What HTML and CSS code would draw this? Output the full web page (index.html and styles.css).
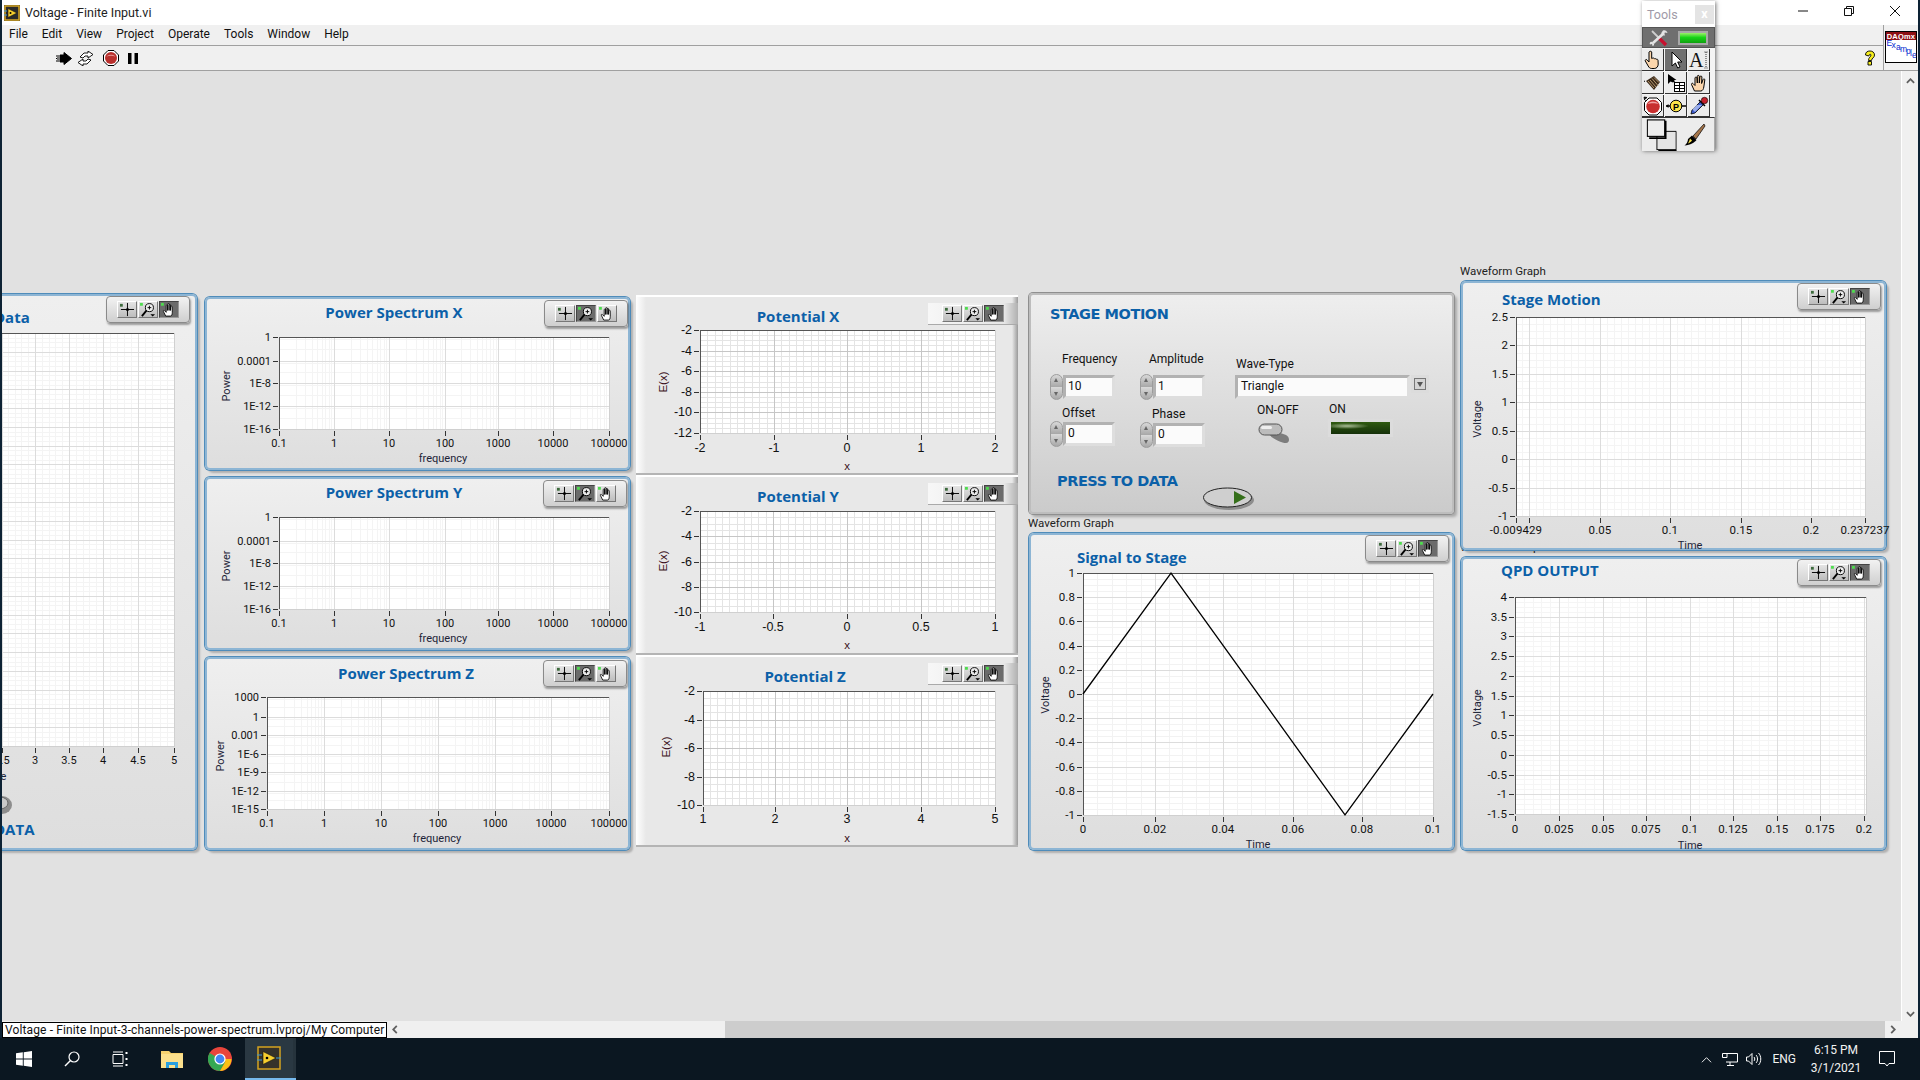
FILE: index.html
```html
<!DOCTYPE html>
<html lang="en">
<head>
<meta charset="utf-8">
<title>Voltage - Finite Input.vi</title>
<link rel="stylesheet" href="styles.css">
</head>
<body>
<svg class="defs" aria-hidden="true">
  <symbol id="g-cross" viewBox="0 0 19 16">
    <rect x="2" y="2" width="3" height="3" fill="#3d6b3d"/>
    <path d="M10 1v14M3 8h14" stroke="#000" stroke-width="1"/>
    <circle cx="10" cy="8" r="1.6" fill="#000"/>
  </symbol>
  <symbol id="g-zoom" viewBox="0 0 19 16">
    <rect x="1" y="1" width="3" height="3" fill="#4fdc4f"/>
    <circle cx="11" cy="6" r="4.3" fill="#eee" stroke="#000"/>
    <path d="M9 6h4M11 4v4" stroke="#000"/>
    <path d="M8 9 3 15" stroke="#000" stroke-width="2"/>
    <path d="M12 13h5l-2.500 2.500z" fill="#000"/>
  </symbol>
  <symbol id="g-hand" viewBox="0 0 19 16">
    <rect x="1" y="1" width="3" height="3" fill="#4fdc4f"/>
    <path d="M6 15 3.500 10c-.4-1 .7-1.500 1.300-.7L6.500 11V4c0-1 1.500-1 1.500 0v5V2.500c0-1 1.600-1 1.600 0V9 3.200c0-1 1.500-1 1.500 0V9l.3-4c.2-1 1.500-.8 1.500.2L13 11c0 2-.5 4-2 4z" fill="#fff" stroke="#000" stroke-width=".9"/>
  </symbol>
  <symbol id="t-point" viewBox="0 0 20 20">
    <path d="M6 2c.6-1 2.400-1 2.700 0v6.500l1-.4c.8-.3 1.500.2 1.700.7.7-.4 1.500-.2 1.800.5.800-.4 1.600 0 1.800.8l.2 4c0 2.500-1.500 4.400-4 4.400H8.700c-1.700 0-2.700-.9-3.500-2.500L2.300 11c-.5-1 .8-2 1.700-1.200L6 12z" fill="#fcd6ac" stroke="#000"/>
  </symbol>
  <symbol id="t-arrow" viewBox="0 0 20 20">
    <path d="M6 2v14l3.400-3 2.300 5 2.300-1-2.300-5H16z" fill="#fff" stroke="#000"/>
  </symbol>
  <symbol id="t-spool" viewBox="0 0 20 20">
    <path d="M3 8 11 3l6 6-6 8z" fill="#3b2a1a"/>
    <path d="M5 8l6 7M7 7l6 7M9 5.500l6 7M11 4.500l5 5" stroke="#b99a70"/>
    <path d="M2 8l-1 .5" stroke="#000"/>
  </symbol>
  <symbol id="t-select" viewBox="0 0 20 20">
    <path d="M2 1v10l2.500-2.400L7 9.500 9 8.500 8 7h2.500z" fill="#000"/>
    <rect x="8.500" y="9.500" width="10" height="9" fill="#fff" stroke="#000"/>
    <path d="M8.500 12.500h10M8.500 15.500h10M13.500 9.500v9" stroke="#000"/>
  </symbol>
  <symbol id="t-grab" viewBox="0 0 20 20">
    <path d="M5.500 18 2.500 11.500c-.4-1 1-1.800 1.700-.8L6 12.500V5c0-1.200 1.800-1.200 2 0l.3 5V3.300c0-1.200 2-1.200 2 0V10l.6-6.200c.2-1.200 2-1 2 .2L12.600 10.500l1.400-4c.4-1 2-.7 1.800.4L14.800 14c-.3 2-1.200 4-3 4z" fill="#fcd6ac" stroke="#000"/>
  </symbol>
  <symbol id="t-stop" viewBox="0 0 20 20">
    <path d="M6 2h8l4.500 4.500v8L14 19H6l-4.500-4.500v-8z" fill="#fff" stroke="#000"/>
    <circle cx="10" cy="10.500" r="6.800" fill="#c8302f"/>
    <path d="M4.500 8c2-3 8-3.500 11 0-3-1-8-1-11 0z" fill="#f0a0a0"/>
    <path d="M1 3 3 5M1 1l3 .5-2.500 2z" stroke="#000" stroke-width=".7"/>
  </symbol>
  <symbol id="t-drop" viewBox="0 0 20 20">
    <path d="M2 18l1-4 9-9 3 3-9 9z" fill="#3b5bd0" stroke="#000" stroke-width=".8"/>
    <path d="M10 4l6 6" stroke="#000" stroke-width="1.500"/>
    <circle cx="15.500" cy="4.500" r="3.200" fill="#c51f2b" stroke="#000" stroke-width=".6"/>
    <path d="M3 13l4-4h6l-7 7z" fill="#d8e4ff" opacity=".6"/>
  </symbol>
  <symbol id="t-colors" viewBox="0 0 33 35">
    <rect x="11.500" y="13.500" width="21" height="20" fill="#e4e4e4" stroke="#000" stroke-width="1"/>
    <path d="M33 14v20H13v2h21V14z" fill="#000"/>
    <rect x="1" y="1" width="19" height="18" fill="#eee" stroke="#000" stroke-width="1.200"/>
    <path d="M20 2v18H3v2h19V2z" fill="#000"/>
  </symbol>
  <symbol id="t-brush" viewBox="0 0 24 24">
    <path d="M22 1 11 13l3 3L23 3z" fill="#a5754a" stroke="#000" stroke-width=".7"/>
    <path d="M10 12.500 14.500 17c-2 2.500-6 5-12 5.500 2-1.500 3.500-4 3.500-6.500z" fill="#000"/>
    <path d="M6 20.500c1.500-.7 3-1.700 4-3l-2-2c-.4 1.700-1 3.500-2 5z" fill="#fbe34a"/>
  </symbol>
</svg>

<div class="window">
  <header class="titlebar">
    <svg class="vi-small" viewBox="0 0 16 16" aria-hidden="true">
      <rect width="16" height="16" fill="#2b2b2b"/>
      <rect x="1" y="1" width="14" height="14" fill="none" stroke="#d8a825" stroke-width="1.500"/>
      <path d="M4 3.500 13 8l-9 4.500z" fill="#f6ce2e" stroke="#111" stroke-width=".6"/>
      <circle cx="6.500" cy="8" r="1" fill="#000"/>
      <path d="M0 6h3M0 10h3" stroke="#3c9ad6"/>
    </svg>
    <span class="win-title">Voltage - Finite Input.vi</span>
    <div class="win-btns">
      <svg class="wb wb-min" viewBox="0 0 10 10" aria-hidden="true"><path d="M0 5h10" stroke="#111"/></svg>
      <svg class="wb wb-res" viewBox="0 0 10 10" aria-hidden="true"><path d="M2.500 2.500V.5h7v7h-2M.5 2.500h7v7h-7z" fill="none" stroke="#111"/></svg>
      <svg class="wb wb-close" viewBox="0 0 10 10" aria-hidden="true"><path d="M0 0l10 10M10 0 0 10" stroke="#111"/></svg>
    </div>
  </header>

  <div class="head">
    <div class="bars">
      <nav class="menubar">
        <span>File</span><span>Edit</span><span>View</span><span>Project</span><span>Operate</span><span>Tools</span><span>Window</span><span>Help</span>
      </nav>
      <div class="toolbar">
        <svg class="tb tb-run" viewBox="0 0 16 13" aria-hidden="true"><path d="M0 4h1M0 6.500h1M0 9h1M2 3v7M4 3h4V.5L15.500 6.500 8 12.500V10H4z" fill="#000" stroke="#000"/></svg>
        <svg class="tb tb-cont" viewBox="0 0 17 15" aria-hidden="true"><path d="M3 6 7 2h4V0l5 3.500L11 7V5H8L6 7zM14 9l-4 4H6v2L1 11.500 6 8v2h3l2-2z" fill="#fff" stroke="#000" stroke-width=".9"/></svg>
        <svg class="tb tb-abort" viewBox="0 0 16 16" aria-hidden="true"><path d="M5 .5h6L15.500 5v6L11 15.500H5L.5 11V5z" fill="#fff" stroke="#000"/><circle cx="8" cy="8" r="6" fill="#b9302d"/><path d="M3.500 6.500c2-2.500 7-2.500 9 0-3-1-6-1-9 0z" fill="#e89a98"/></svg>
        <svg class="tb tb-pause" viewBox="0 0 10 11" aria-hidden="true"><path d="M0 0h3.500v11H0zM6.500 0H10v11H6.500z"/></svg>
        <svg class="tb tb-help" viewBox="0 0 12 16" aria-hidden="true"><path d="M1.500 5C1.500 2 3.500 1 6 1s4.500 1.500 4.500 4c0 3-3 3-3 5.500h-3C4.500 7 7 7 7 5c0-1-2-1-2.200 1zM4 11.500h3.500v3.500H4z" fill="#f6ee1f" stroke="#000" stroke-width=".9"/></svg>
      </div>
    </div>
    <div class="vi-pane">
      <svg class="vi-icon" viewBox="0 0 32 32" role="img" aria-label="DAQmx Example">
        <rect x=".5" y=".5" width="31" height="31" fill="#fff" stroke="#000"/>
        <rect x="1" y="1" width="30" height="8" fill="#8c0f13"/>
        <text class="daq" x="16" y="8">DAQmx</text>
        <text class="ex" x="1.500" y="15">E</text><text class="ex" x="6.500" y="17">x</text><text class="ex" x="11" y="19">a</text><text class="ex" x="15" y="21">m</text><text class="ex" x="21" y="23">p</text><text class="ex" x="25" y="25">l</text><text class="ex" x="27" y="27">e</text>
      </svg>
    </div>
  </div>

  <div class="main">
    <main class="canvas">
      <section class="panel blue p-data" data-chart="data"><div class="gp gp-data" data-on="2"></div>
        <svg class="dial" viewBox="0 0 14 24" aria-hidden="true"><ellipse cx="2" cy="12" rx="10" ry="9" fill="#8d8d8d"/><ellipse cx="0" cy="10" rx="8" ry="6" fill="#c9c9c9" stroke="#666"/></svg>
      </section>
      <section class="panel blue p-sx" data-chart="sx"><div class="gp gp-s" data-on="1"></div></section>
      <section class="panel blue p-sy" data-chart="sy"><div class="gp gp-s" data-on="1"></div></section>
      <section class="panel blue p-sz" data-chart="sz"><div class="gp gp-s" data-on="1"></div></section>

      <section class="panel flat p-px" data-chart="px"><div class="gp gp-flat" data-on="2"></div></section>
      <section class="panel flat p-py" data-chart="py"><div class="gp gp-flat" data-on="2"></div></section>
      <section class="panel flat p-pz" data-chart="pz"><div class="gp gp-flat" data-on="2"></div></section>

      <section class="panel p-stage">
        <h2 class="st-title">STAGE MOTION</h2>
        <span class="lbl l-freq">Frequency</span>
        <div class="num n-freq"><span class="spin"></span><span class="field">10</span></div>
        <span class="lbl l-amp">Amplitude</span>
        <div class="num n-amp"><span class="spin"></span><span class="field">1</span></div>
        <span class="lbl l-off">Offset</span>
        <div class="num n-off"><span class="spin"></span><span class="field">0</span></div>
        <span class="lbl l-phase">Phase</span>
        <div class="num n-phase"><span class="spin"></span><span class="field">0</span></div>
        <span class="lbl l-wave">Wave-Type</span>
        <div class="ring"><span class="field ring-text">Triangle</span><span class="ring-btn"></span></div>
        <span class="lbl l-onoff">ON-OFF</span>
        <svg class="toggle" viewBox="0 0 34 22" aria-hidden="true"><path d="M14 8 28 13c4 2 4 8 0 8-4 0-15-5-17-9z" fill="#7d7d7d"/><rect x="1" y="2" width="23" height="11" rx="5.500" fill="#bcbcbc" stroke="#555"/><rect x="3" y="4" width="11" height="3" rx="1.500" fill="#eee"/></svg>
        <span class="lbl l-on">ON</span>
        <div class="led"></div>
        <h2 class="st-press">PRESS TO DATA</h2>
        <svg class="oval" viewBox="0 0 52 24" aria-hidden="true"><ellipse cx="26" cy="13" rx="25" ry="10" fill="#8d8d8d"/><ellipse cx="24.500" cy="10.500" rx="24" ry="9.500" fill="#cfcfcf" stroke="#222"/><path d="M31 4l12 6.500L31 17z" fill="#356f1a"/></svg>
      </section>

      <span class="wf-label wf-signal">Waveform Graph</span>
      <section class="panel blue p-signal" data-chart="signal"><div class="gp gp-w" data-on="2"></div></section>
      <span class="wf-label wf-qpd">Waveform Graph</span>
      <span class="wf-label wf-motion">Waveform Graph</span>
      <section class="panel blue p-motion" data-chart="motion"><div class="gp gp-w" data-on="2"></div></section>
      <section class="panel blue p-qpd" data-chart="qpd"><div class="gp gp-w" data-on="2"></div></section>
    </main>
    <aside class="vscroll">
      <svg class="sb-arrow" viewBox="0 0 10 6" aria-hidden="true"><path d="M1 5l4-4 4 4" fill="none" stroke="#606060" stroke-width="2"/></svg>
      <svg class="sb-arrow" viewBox="0 0 10 6" aria-hidden="true"><path d="M1 1l4 4 4-4" fill="none" stroke="#606060" stroke-width="2"/></svg>
    </aside>
  </div>

  <div class="hbar">
    <div class="path">Voltage - Finite Input-3-channels-power-spectrum.lvproj/My Computer</div>
    <svg class="hb-arrow" viewBox="0 0 6 10" aria-hidden="true"><path d="M5 1 1 5l4 4" fill="none" stroke="#606060" stroke-width="2"/></svg>
    <div class="track"><div class="thumb"></div></div>
    <svg class="hb-arrow" viewBox="0 0 6 10" aria-hidden="true"><path d="M1 1l4 4-4 4" fill="none" stroke="#606060" stroke-width="2"/></svg>
    <div class="corner"></div>
  </div>
</div>

<footer class="taskbar">
  <div class="tk tk-first"><svg class="ti" viewBox="0 0 16 16" aria-hidden="true"><path d="M0 2.300 6.800 1.300V7.500H0zM7.700 1.200 16 0v7.500H7.700zM0 8.400H6.800v6.300L0 13.700zM7.700 8.400H16V16L7.700 14.800z" fill="#fff"/></svg></div>
  <div class="tk"><svg class="ti" viewBox="0 0 16 16" aria-hidden="true"><circle cx="10" cy="6" r="5" fill="none" stroke="#fff" stroke-width="1.200"/><path d="M6.500 9.500 1 15" stroke="#fff" stroke-width="1.400"/></svg></div>
  <div class="tk tk-gap"><svg class="ti" viewBox="0 0 16 16" aria-hidden="true"><path d="M1 3.500h10v9H1zM1 1h10M1 15h10" fill="none" stroke="#fff"/><path d="M13.500 1h2v2h-2zM13.500 7h2v2h-2zM13.500 13h2v2h-2z" fill="#fff"/></svg></div>
  <div class="tk"><svg class="ti ti-folder" viewBox="0 0 22 18" aria-hidden="true"><path d="M0 1h8l2 2h12v15H0z" fill="#f6d26f"/><path d="M0 4h22v14H0z" fill="#fbe08d"/><path d="M5 18v-6h12v6h-3v-3H8v3z" fill="#29a0e0"/></svg></div>
  <div class="tk"><svg class="ti ti-chrome" viewBox="0 0 24 24" aria-hidden="true"><circle cx="12" cy="12" r="12" fill="#e8453c"/><path d="M12 12 1.600 6A12 12 0 0 0 12 24l5.500-9.500z" fill="#34a853"/><path d="M12 12h11.500A12 12 0 0 1 12 24l5.500-9.500z" fill="#fbc116"/><circle cx="12" cy="12" r="5.600" fill="#fff"/><circle cx="12" cy="12" r="4.400" fill="#4285f4"/></svg></div>
  <div class="tk tk-active"><svg class="ti ti-lv" viewBox="0 0 24 24" aria-hidden="true"><rect x="1" y="1" width="22" height="22" fill="#35322a" stroke="#d5a21f" stroke-width="1.500"/><path d="M6 5.500 19 12 6 18.500z" fill="#f6ce2e" stroke="#111" stroke-width=".6"/><circle cx="10" cy="12" r="1.300" fill="#000"/><path d="M0 9h5M0 14h5M19 12h5" stroke="#3c9ad6" stroke-width="1.200"/></svg></div>
  <div class="tk-sliver"></div>
  <div class="tray">
    <svg class="tr-chev" viewBox="0 0 12 7" aria-hidden="true"><path d="M1 6.500 6 1.500l5 5" fill="none" stroke="#fff"/></svg>
    <svg class="tr-net" viewBox="0 0 16 14" aria-hidden="true"><path d="M4 1.500h11.500v8.500H4M8 10v3M5 13.500h7" fill="none" stroke="#fff"/><path d="M.5 1.500h4.500v4H.5z" fill="#0b1721" stroke="#fff"/></svg>
    <svg class="tr-vol" viewBox="0 0 16 14" aria-hidden="true"><path d="M.5 5h2L6 1.500v11L2.500 9h-2zM8 5c1 1 1 3 0 4M10 3c2 2 2 6 0 8M12.500 1c3 3 3 9 0 12" fill="none" stroke="#fff"/></svg>
    <span class="tr-lang">ENG</span>
    <div class="clock"><span>6:15 PM</span><span>3/1/2021</span></div>
    <svg class="tr-note" viewBox="0 0 16 16" aria-hidden="true"><path d="M.5.500h15v12H10L8 15l-2-2.500H.5z" fill="none" stroke="#fff"/></svg>
  </div>
</footer>

<aside class="tools">
  <div class="tools-head"><span>Tools</span><span class="tools-x">x</span></div>
  <div class="tools-auto">
    <svg class="auto-ic" viewBox="0 0 20 18" aria-hidden="true">
      <path d="M3 2 11 10" stroke="#cfcfcf" stroke-width="1.800"/>
      <path d="M10 9l7 7" stroke="#c8102e" stroke-width="3.200"/>
      <path d="M15 4 4 14" stroke="#e4e4e4" stroke-width="2.600"/>
      <path d="M14 1.500c2-1 4 .5 4.500 2.500l-2.500-.5-1 1 1 2c-2 .5-4-1-3.500-3z" fill="#e4e4e4"/>
      <path d="M1.500 13c1.500-.5 3 .5 3.500 2 .3 1-.5 2-1.500 2l-.5-2-2 .5c-.5-.8-.3-2 .5-2.500z" fill="#e4e4e4"/>
    </svg>
    <span class="auto-led"></span>
  </div>
  <div class="tools-grid">
    <button class="tbn"><svg viewBox="0 0 20 20"><use href="#t-point"/></svg></button>
    <button class="tbn on"><svg viewBox="0 0 20 20"><use href="#t-arrow"/></svg></button>
    <button class="tbn"><svg viewBox="0 0 20 20"><text class="tool-a" x="0" y="17">A</text><path d="M15.500 2h3M17 2v16M15.500 18h3" stroke="#333" stroke-dasharray="1 1" fill="none"/></svg></button>
    <button class="tbn"><svg viewBox="0 0 20 20"><use href="#t-spool"/></svg></button>
    <button class="tbn"><svg viewBox="0 0 20 20"><use href="#t-select"/></svg></button>
    <button class="tbn"><svg viewBox="0 0 20 20"><use href="#t-grab"/></svg></button>
    <button class="tbn"><svg viewBox="0 0 20 20"><use href="#t-stop"/></svg></button>
    <button class="tbn"><svg viewBox="0 0 20 20"><path d="M0 10h4M15 10h5" stroke="#000" stroke-width="1.500"/><path d="M0 10l2.500-2v4z" fill="#000"/><circle cx="10" cy="10" r="5.800" fill="#fbe34a" stroke="#000"/><text class="probe-p" x="10" y="13.500">P</text></svg></button>
    <button class="tbn"><svg viewBox="0 0 20 20"><use href="#t-drop"/></svg></button>
  </div>
  <div class="tools-color">
    <svg class="tc-sw" viewBox="0 0 33 35"><use href="#t-colors"/></svg>
    <svg class="tc-br" viewBox="0 0 24 24"><use href="#t-brush"/></svg>
  </div>
</aside>
<script src="app.js"></script>
</body>
</html>
```

FILE: styles.css
```css
* { box-sizing: border-box; }
html, body { margin: 0; height: 100%; }
body {
  width: 1920px; height: 1080px; overflow: hidden; position: relative;
  display: flex; flex-direction: column;
  background: #0d2234;
  font-family: Roboto, "Noto Sans", sans-serif; font-size: 12px; color: #111;
}
.defs { position: absolute; width: 0; height: 0; }
.probe-p { font: bold 9px "Liberation Sans", sans-serif; text-anchor: middle; fill: #000; }

.window { flex: 1; min-height: 0; margin: 0 2px; display: flex; flex-direction: column; background: #f0f0f0; }

/* title bar */
.titlebar { height: 25px; flex: none; display: flex; align-items: center; background: #fff; padding-left: 2px; }
.vi-small { width: 16px; height: 16px; }
.win-title { margin-left: 5px; font-size: 12.5px; color: #222; }
.win-btns { margin-left: auto; display: flex; align-items: center; padding-bottom: 3px; }
.wb { width: 10px; height: 10px; }
.wb-min { margin-right: 36px; }
.wb-res { margin-right: 36px; }
.wb-close { margin-right: 18px; }

/* menu + toolbar */
.head { flex: none; display: flex; height: 46px; }
.bars { flex: 1; display: flex; flex-direction: column; }
.menubar { height: 21px; display: flex; gap: 14px; align-items: center; padding: 0 0 2px 7px; background: #f0f0f0; border-bottom: 1px solid #a0a0a0; font-size: 12px; }
.toolbar { flex: 1; display: flex; align-items: center; background: #f0f0f0; border-bottom: 1px solid #a0a0a0; padding-left: 54px; }
.tb-run { width: 16px; height: 13px; }
.tb-cont { width: 17px; height: 15px; margin-left: 5px; }
.tb-abort { width: 16px; height: 16px; margin-left: 9px; }
.tb-pause { width: 10px; height: 11px; margin-left: 9px; }
.tb-help { width: 12px; height: 16px; margin-left: auto; margin-right: 7px; }
.vi-pane { width: 35px; border-left: 1px solid #a0a0a0; background: #f0f0f0; border-bottom: 1px solid #a0a0a0; padding: 6px 0 0 1px; }
.vi-icon { width: 32px; height: 32px; display: block; }
.daq { font: bold 7.500px "Liberation Sans", sans-serif; fill: #fff; text-anchor: middle; letter-spacing: .2px; }
.ex { font: 8.500px "Liberation Sans", sans-serif; fill: #0a2bd0; }

/* main */
.main { flex: 1; min-height: 0; display: flex; }
.canvas { flex: 1; position: relative; overflow: hidden; background: #e1e1e1; }
.vscroll { width: 17px; background: #f0f0f0; border-left: 1px solid #fff; display: flex; flex-direction: column; justify-content: space-between; align-items: center; padding: 7px 0 4px; }
.sb-arrow { width: 9px; height: 6px; }
.hbar { height: 17px; flex: none; display: flex; align-items: center; background: #f0f0f0; }
.path { width: 385px; height: 16px; background: #fff; border: 1px solid #000; font-size: 12px; letter-spacing: .13px; line-height: 14px; padding-left: 2px; white-space: nowrap; }
.hb-arrow { width: 6px; height: 9px; margin: 0 5px; }
.track { flex: 1; height: 100%; display: flex; justify-content: flex-end; }
.thumb { width: 1160px; background: #cdcdcd; }
.corner { width: 17px; height: 100%; }

/* free-placed front-panel objects */
.panel { position: absolute; overflow: hidden; }
.panel > svg.plot { position: absolute; left: 0; top: 0; width: 100%; height: 100%; overflow: visible; }
.blue {
  border: 2px solid #8db5d4; border-radius: 5px;
  background: linear-gradient(#efefef, #dedede);
  box-shadow: 0 0 0 1px #4f8cba, 3px 3px 2px rgba(0,0,0,.22); overflow: visible;
}
.flat {
  background: linear-gradient(90deg, #fff, #e8e8e8 10px, #e8e8e8 calc(100% - 6px), #9a9a9a);
  border-top: 2px solid #fff; border-bottom: 2px solid #b4b4b4;
}
.p-data { left: -22px; top: 223px; width: 217px; height: 556px; }
.p-sx { left: 203px; top: 226px; width: 425px; height: 173px; }
.p-sy { left: 203px; top: 406px; width: 425px; height: 173px; }
.p-sz { left: 203px; top: 586px; width: 425px; height: 193px; }
.p-px { left: 634px; top: 224px; width: 382px; height: 180px; }
.p-py { left: 634px; top: 404px; width: 382px; height: 180px; }
.p-pz { left: 634px; top: 584px; width: 382px; height: 192px; }
.p-stage {
  left: 1027px; top: 222px; width: 425px; height: 221px;
  background: linear-gradient(#eeeeee, #cbcbcb);
  border: 2px solid #bdbdbd; border-radius: 4px;
  box-shadow: 0 0 0 1px #8f8f8f, 3px 3px 3px rgba(0,0,0,.25);
}
.p-signal { left: 1027px; top: 462px; width: 425px; height: 317px; }
.p-motion { left: 1459px; top: 210px; width: 425px; height: 269px; z-index: 2; }
.p-qpd { left: 1459px; top: 486px; width: 425px; height: 293px; z-index: 2; }
.wf-label { position: absolute; font-size: 11.5px; white-space: nowrap; color: #222; }
.wf-signal { left: 1026px; top: 445px; }
.wf-motion { left: 1458px; top: 193px; }
.wf-qpd { left: 1458px; top: 469px; }

/* chart text */
.t-title { font: bold 15px "Open Sans", sans-serif; fill: #0b60a8; }
.t-tick { font: 11px Roboto, sans-serif; fill: #111; }
.t-tick-w { font: 11.500px Roboto, sans-serif; fill: #111; letter-spacing: .1px; }
.t-tick-p { font: 12.500px "Liberation Sans", sans-serif; fill: #111; }
.t-axis { font: 11px Roboto, sans-serif; fill: #1d2438; }
.t-axis-p { font: 11.500px "Liberation Sans", sans-serif; fill: #3a1020; }

/* graph palette */
.gp { position: absolute; display: flex; justify-content: center; align-items: center; gap: 1px; z-index: 1; }
.gp-s, .gp-w, .gp-data {
  width: 84px; height: 27px; border: 1px solid #8a8a8a; border-radius: 4px;
  background: linear-gradient(#f2f2f2, #cfcfcf);
  box-shadow: 1px 2px 2px rgba(0,0,0,.35);
}
.gp-s { left: 337px; top: 1px; }
.p-sy .gp-s, .p-sz .gp-s { left: 336px; }
.gp-w { left: 334px; top: 0; }
.gp-data { left: 124px; top: 0; }
.gp-flat {
  left: 292px; top: 6px; width: 90px; height: 22px;
  background: linear-gradient(90deg, #f7f7f7, #e6e6e6 85%, #b0b0b0);
  border-bottom: 1px solid #aaa;
}
.gb { width: 20px; height: 17px; display: block; background: linear-gradient(#e4e4e4, #bdbdbd); border: 1px solid; border-color: #fff #777 #777 #fff; }
.gb svg { display: block; width: 100%; height: 100%; }
.gb.on { background: #6b6b6b; border-color: #444 #999 #999 #444; }
.dial { position: absolute; left: 18px; top: 497px; width: 14px; height: 24px; }

/* stage controls */
.p-stage > * { position: absolute; }
.st-title, .st-press { margin: 0; font: bold 14.5px "DejaVu Sans", sans-serif; color: #0b60a8; letter-spacing: -.45px; white-space: nowrap; line-height: 18px; }
.st-title { left: 19px; top: 10px; }
.st-press { left: 26px; top: 177px; }
.lbl { font-size: 12px; line-height: 14px; white-space: nowrap; color: #111; }
.l-freq { left: 31px; top: 57px; }
.l-amp { left: 118px; top: 57px; }
.l-off { left: 31px; top: 111px; }
.l-phase { left: 121px; top: 112px; }
.l-wave { left: 205px; top: 62px; }
.l-onoff { left: 226px; top: 108px; }
.l-on { left: 298px; top: 107px; }
.num { display: flex; align-items: center; height: 26px; }
.n-freq { left: 19px; top: 79px; }
.n-amp { left: 109px; top: 79px; }
.n-off { left: 19px; top: 126px; }
.n-phase { left: 109px; top: 127px; }
.spin {
  position: relative; width: 13px; height: 26px; border-radius: 7px; flex: none; border: 1px solid #9c9c9c;
  background: linear-gradient(#d8d8d8, #a8a8a8 49%, #777 50%, #d8d8d8 52%, #a8a8a8);
}
.spin::before, .spin::after { content: ""; position: absolute; left: 3px; border: 2.500px solid transparent; }
.spin::before { top: 3px; border-top: 0; border-bottom: 4px solid #666; }
.spin::after { bottom: 3px; border-bottom: 0; border-top: 4px solid #666; }
.field {
  display: block; background: #fbfbfb; border: 3px solid; border-color: #b2b2b2 #dedede #dedede #b2b2b2;
  font-size: 12px; line-height: 17px; padding-left: 2px;
}
.num .field { width: 52px; height: 24px; }
.ring { left: 204px; top: 80px; display: flex; align-items: flex-start; }
.ring-text { width: 175px; height: 24px; padding-left: 3px; }
.ring-btn {
  width: 18px; height: 18px; margin-left: 1px; background: #d4d4d4;
  border: 3px solid #dcdcdc; outline: 1px solid #777; outline-offset: -4px;
  position: relative;
}
.ring-btn::after { content: ""; position: absolute; left: 3px; top: 4px; border: 3px solid transparent; border-top: 5px solid #555; border-bottom: 0; }
.toggle { left: 227px; top: 127px; width: 34px; height: 22px; }
.led {
  left: 297px; top: 124px; width: 65px; height: 18px; border: 3px solid #dcdcdc;
  background: radial-gradient(ellipse 22px 3px at 16px 4px, #a9bd95, transparent), linear-gradient(#2f5a10, #15300a);
}
.oval { left: 172px; top: 192px; width: 52px; height: 24px; }

/* taskbar */
.taskbar { height: 42px; flex: none; display: flex; align-items: stretch; background: #0b1721; color: #fff; }
.tk { width: 48px; display: flex; align-items: center; justify-content: center; }
.tk-gap { margin-right: 4px; }
.ti { width: 16px; height: 16px; }
.ti-folder { width: 22px; height: 18px; }
.ti-chrome { width: 24px; height: 24px; }
.ti-lv { width: 24px; height: 24px; }
.tk-active { background: #2a3842; border-bottom: 2px solid #76b9ed; margin-left: 1px; }
.tk-sliver { width: 3px; background: #26333c; border-bottom: 2px solid #76b9ed; }
.tray { margin-left: auto; display: flex; align-items: center; padding-right: 25px; }
.tr-chev { width: 11px; height: 7px; margin-right: 10px; }
.tr-net { width: 16px; height: 14px; margin-right: 8px; }
.tr-vol { width: 16px; height: 14px; margin-right: 10px; }
.tr-lang { font-size: 12px; margin-right: 9px; color: #f2f2f2; }
.clock { width: 62px; display: flex; flex-direction: column; align-items: center; gap: 3px; font-size: 12px; line-height: 15px; margin-right: 12px; color: #f2f2f2; }
.tr-note { width: 16px; height: 16px; }

/* floating tools palette */
.tools {
  position: absolute; left: 1642px; top: 1px; width: 73px; height: 149px; z-index: 5;
  background: #f4f4f4; box-shadow: 1px 1px 4px rgba(0,0,0,.55); display: flex; flex-direction: column;
}
.tools-head { height: 26px; flex: none; background: #fff; display: flex; align-items: center; justify-content: space-between; padding: 0 1px 0 5px; color: #a09aa8; font-size: 12.500px; }
.tools-x { width: 19px; height: 19px; background: #e4e4e4; color: #fff; text-align: center; line-height: 18px; font-weight: bold; }
.tools-auto { height: 21px; flex: none; background: #6f6f6f; display: flex; align-items: center; gap: 9px; padding-left: 6px; border: 1px solid #555; }
.auto-ic { width: 20px; height: 18px; }
.auto-led { width: 30px; height: 14px; border: 2px solid #a8a8a8; background: linear-gradient(#9cf06a, #18d418 45%, #10a010); }
.tools-grid { display: grid; grid-template-columns: repeat(3, 22px); grid-auto-rows: 22px; gap: 1px; margin-top: 1px; }
.tbn { width: 22px; height: 22px; padding: 0; border: 0; border-right: 1px solid #333; border-bottom: 1px solid #333; background: #ececec; display: flex; align-items: center; justify-content: center; }
.tbn svg { width: 20px; height: 20px; display: block; }
.tbn.on { background: #707070; }
.tool-a { font: 20px "Liberation Serif", serif; fill: #111; }
.tools-color { flex: 1; display: flex; align-items: flex-start; padding: 1px 0 0 3px; gap: 4px; background: #ececec; border-top: 1px solid #333; border-right: 1px solid #aaa; }
.tc-sw { width: 33px; height: 32px; }
.tc-br { width: 24px; height: 24px; margin-top: 4px; }
```

FILE: app.js
```js
const pow = (a, b) => Array.from({ length: b }, (_, i) => a + i);
const lin = (a, b, n) => pow(0, n + 1).map(i => a + (b - a) * i / n);
const zip = (p, l) => p.map((v, i) => [v, l[i]]);

const sxX = zip([279, 334, 389, 445, 498, 553, 609], ['0.1', '1', '10', '100', '1000', '10000', '100000']);
const szX = zip([267, 324, 381, 438, 495, 551, 609], ['0.1', '1', '10', '100', '1000', '10000', '100000']);
const pwrY = ['1', '0.0001', '1E-8', '1E-12', '1E-16'];

const logMinor = t => {
  const out = [];
  for (let i = 0; i + 1 < t.length; i++)
    for (let k = 2; k < 10; k++) out.push(t[i][0] + (t[i + 1][0] - t[i][0]) * Math.log10(k));
  return out;
};
const split = (t, n) => {
  const out = [];
  for (let i = 0; i + 1 < t.length; i++)
    for (let k = 1; k < n; k++) out.push(t[i][0] + (t[i + 1][0] - t[i][0]) * k / n);
  return out;
};
const bands = (t, f) => {
  const out = [];
  for (let i = 0; i + 1 < t.length; i++) f.forEach(k => out.push(t[i][0] + (t[i + 1][0] - t[i][0]) * k));
  return out;
};

function power(title, tx, y0, yPos, yLab, xt, x0, xlab, ylabX, txt, xlabY, tickY) {
  const yt = zip(yPos, yLab);
  return {
    title, tx, ty: y0, plot: [x0, 609, yPos[0], yPos[yPos.length - 1]], xt, yt,
    xm: logMinor(xt), ym: bands(yt, [0.09, 0.5]),
    major: '#dcdcdc', minor: '#f4f4f4', tick: 't-tick', axis: 't-axis',
    xl: ['frequency', txt, xlabY], yl: ['Power', ylabX, (yPos[0] + yPos[yPos.length - 1]) / 2 + 3], tickY
  };
}
function potential(title, tx, ty, y0, y1, yl, xt, x0, lby, xly, exx, exy) {
  const yt = zip(lin(y0, y1, yl.length - 1), yl);
  return {
    title, tx, ty, plot: [x0, 995, y0, y1], xt, yt,
    xm: split(xt, 40 / (xt.length - 1)), ym: split(yt, 4),
    major: '#c6c6c6', minor: '#e4e4e4', tick: 't-tick-p', axis: 't-axis-p',
    xl: ['x', 847, xly], yl: ['E(x)', exx, exy], tickY: lby
  };
}

const CHARTS = {
  data: {
    title: 'Data', tx: -6, ty: 318, anchor: 'start', plot: [-30, 174, 333, 746],
    xt: zip([-33, 35, 69, 103, 138, 174], ['2', '3', '3.5', '4', '4.5', '5']).map((v, i) => i ? v : [2, '2.5']),
    yt: [], xm: split([[-33], [1], [35], [69], [103], [138], [174]], 5),
    ym: split(lin(333, 746, 22).map(v => [v]), 4), yExtra: lin(333, 746, 22),
    major: '#dcdcdc', minor: '#f4f4f4', tick: 't-tick', axis: 't-axis',
    xl: ['Time', -6, 776], tickY: 760,
    extra: { text: 'DATA', x: -6, y: 830 }
  },
  sx: power('Power Spectrum X', 394, 313, [337, 361, 383, 406, 429], pwrY, sxX, 279, 443, 226, 443, 458, 443),
  sy: power('Power Spectrum Y', 394, 493, [517, 541, 563, 586, 609], pwrY, sxX, 279, 443, 226, 443, 638, 623),
  sz: power('Power Spectrum Z', 406, 674, [697, 717, 735, 754, 772, 791, 809],
    ['1000', '1', '0.001', '1E-6', '1E-9', '1E-12', '1E-15'], szX, 267, 437, 220, 437, 838, 823),
  px: potential('Potential X', 798, 317, 330, 433, ['-2', '-4', '-6', '-8', '-10', '-12'],
    zip([700, 774, 847, 921, 995], ['-2', '-1', '0', '1', '2']), 700, 448, 466, 663, 382),
  py: potential('Potential Y', 798, 497, 511, 612, ['-2', '-4', '-6', '-8', '-10'],
    zip([700, 773, 847, 921, 995], ['-1', '-0.5', '0', '0.5', '1']), 700, 627, 645, 663, 561),
  pz: potential('Potential Z', 805, 677, 691, 805, ['-2', '-4', '-6', '-8', '-10'],
    zip([703, 775, 847, 921, 995], ['1', '2', '3', '4', '5']), 703, 819, 838, 666, 747),
  signal: {
    title: 'Signal to Stage', tx: 1077, ty: 558, anchor: 'start', plot: [1083, 1433, 573, 815],
    xt: zip([1083, 1155, 1223, 1293, 1362, 1433], ['0', '0.02', '0.04', '0.06', '0.08', '0.1']),
    yt: zip(lin(573, 815, 10), ['1', '0.8', '0.6', '0.4', '0.2', '0', '-0.2', '-0.4', '-0.6', '-0.8', '-1']),
    xm: split(zip([1083, 1155, 1223, 1293, 1362, 1433], []), 5), ym: split(lin(573, 815, 10).map(v => [v]), 4),
    major: '#dcdcdc', minor: '#f2f2f2', tick: 't-tick-w', axis: 't-axis',
    xl: ['Time', 1258, 844], yl: ['Voltage', 1045, 695], tickY: 829,
    line: [[1083, 694], [1171, 573], [1345, 815], [1433, 694]]
  },
  motion: {
    title: 'Stage Motion', tx: 1502, ty: 300, anchor: 'start', plot: [1516, 1865, 317, 516],
    xt: zip([1516, 1529, 1600, 1670, 1741, 1811, 1865], ['-0.009429', '', '0.05', '0.1', '0.15', '0.2', '0.237237']),
    yt: zip(lin(317, 516, 7), ['2.5', '2', '1.5', '1', '0.5', '0', '-0.5', '-1']),
    xm: pow(0, 50).map(i => 1522 + i * 7.05), ym: split(lin(317, 516, 7).map(v => [v]), 4),
    major: '#dcdcdc', minor: '#f4f4f4', tick: 't-tick-w', axis: 't-axis',
    xl: ['Time', 1690, 545], yl: ['Voltage', 1477, 419], tickY: 530
  },
  qpd: {
    title: 'QPD OUTPUT', tx: 1501, ty: 571, anchor: 'start', plot: [1515, 1866, 597, 814],
    xt: zip([1515, 1559, 1603, 1646, 1690, 1733, 1777, 1820, 1864], ['0', '0.025', '0.05', '0.075', '0.1', '0.125', '0.15', '0.175', '0.2']),
    yt: zip(lin(597, 814, 11), ['4', '3.5', '3', '2.5', '2', '1.5', '1', '0.5', '0', '-0.5', '-1', '-1.5']),
    xm: split(zip([1515, 1559, 1603, 1646, 1690, 1733, 1777, 1820, 1864], []), 5), ym: split(lin(597, 814, 11).map(v => [v]), 4),
    major: '#dedede', minor: '#f5f5f5', tick: 't-tick-w', axis: 't-axis',
    xl: ['Time', 1690, 845], yl: ['Voltage', 1477, 708], tickY: 829
  }
};

const NS = 'http://www.w3.org/2000/svg';
function el(parent, name, attrs, text) {
  const n = document.createElementNS(NS, name);
  Object.entries(attrs).forEach(([k, v]) => n.setAttribute(k, v));
  if (text !== undefined) n.textContent = text;
  parent.appendChild(n);
  return n;
}
const px = v => Math.round(v) + 0.5;

function buildChart(host, c) {
  const r = host.getBoundingClientRect();
  const left = r.left + host.clientLeft, top = r.top + host.clientTop;
  const svg = document.createElementNS(NS, 'svg');
  svg.setAttribute('class', 'plot');
  svg.setAttribute('viewBox', `${left} ${top} ${host.clientWidth} ${host.clientHeight}`);
  host.insertBefore(svg, host.firstChild);

  const [x0, x1, y0, y1] = c.plot;
  el(svg, 'rect', { x: x0, y: y0, width: x1 - x0, height: y1 - y0, fill: '#fff' });

  const lines = el(svg, 'g', { 'shape-rendering': 'crispEdges' });
  const vline = (x, col) => { if (x >= x0 && x <= x1) el(lines, 'line', { x1: px(x), x2: px(x), y1: y0, y2: y1, stroke: col }); };
  const hline = (y, col) => { if (y >= y0 && y <= y1) el(lines, 'line', { x1: x0, x2: x1, y1: px(y), y2: px(y), stroke: col }); };
  c.xm.forEach(x => vline(x, c.minor));
  c.ym.forEach(y => hline(y, c.minor));
  c.xt.forEach(t => vline(t[0], c.major));
  c.yt.forEach(t => hline(t[0], c.major));
  (c.yExtra || []).forEach(y => hline(y, c.major));

  el(lines, 'path', {
    d: `M${x0 + .5} ${y1}V${y0 + .5}H${x1}`, fill: 'none', stroke: '#555'
  });
  el(lines, 'path', {
    d: `M${x0} ${y1 + .5}H${x1 + .5}V${y0}`, fill: 'none', stroke: '#d0d0d0'
  });

  c.xt.forEach(([x, lab]) => {
    el(lines, 'line', { x1: px(x), x2: px(x), y1: y1 + 2, y2: y1 + 7, stroke: '#333' });
    if (lab) el(svg, 'text', { class: c.tick, x, y: c.tickY + 4, 'text-anchor': 'middle' }, lab);
  });
  c.yt.forEach(([y, lab]) => {
    el(lines, 'line', { x1: x0 - 6, x2: x0 - 1, y1: px(y), y2: px(y), stroke: '#333' });
    el(svg, 'text', { class: c.tick, x: x0 - 8, y: y + 4, 'text-anchor': 'end' }, lab);
  });

  if (c.xl) el(svg, 'text', { class: c.axis, x: c.xl[1], y: c.xl[2] + 4, 'text-anchor': 'middle' }, c.xl[0]);
  if (c.yl) el(svg, 'text', {
    class: c.axis, x: c.yl[1] + 4, y: c.yl[2], 'text-anchor': 'middle',
    transform: `rotate(-90 ${c.yl[1] + 4} ${c.yl[2]})`
  }, c.yl[0]);

  el(svg, 'text', { class: 't-title', x: c.tx, y: c.ty + 5, 'text-anchor': c.anchor || 'middle' }, c.title);
  if (c.extra) el(svg, 'text', { class: 't-title', x: c.extra.x, y: c.extra.y + 5 }, c.extra.text);

  if (c.line) el(svg, 'polyline', {
    points: c.line.map(p => p.join(',')).join(' '), fill: 'none', stroke: '#000', 'stroke-width': 1.3
  });
}

document.querySelectorAll('[data-chart]').forEach(h => buildChart(h, CHARTS[h.dataset.chart]));

document.querySelectorAll('.gp').forEach(p => {
  const on = +p.dataset.on;
  ['g-cross', 'g-zoom', 'g-hand'].forEach((id, i) => {
    const b = document.createElement('span');
    b.className = 'gb' + (i === on ? ' on' : '');
    b.innerHTML = `<svg viewBox="0 0 19 16"><use href="#${id}"/></svg>`;
    p.appendChild(b);
  });
});
```
